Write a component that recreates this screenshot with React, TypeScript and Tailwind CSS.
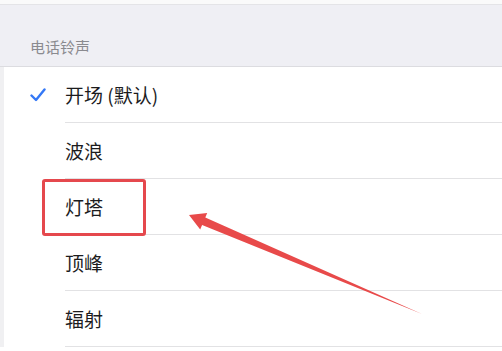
import React from "react";

const items = ["开场 (默认)", "波浪", "灯塔", "顶峰", "辐射"];

export default function App() {
  return (
    <div
      className="relative w-[502px] h-[351px] overflow-hidden bg-white"
      style={{ fontFamily: '"Noto Sans CJK SC", "Noto Sans", sans-serif' }}
    >
      <div className="h-[5px] bg-[#fafafa] border-b border-[#e4e4e7]" />
      <div className="h-[62px] bg-[#efeff4] border-b border-[#dcdce0] flex items-end pl-[30px] pb-[9px]">
        <span className="text-[15px] leading-[20px] text-[#8a8a8f]">电话铃声</span>
      </div>
      <div className="flex">
        <div className="w-[4px] bg-[#f0f0f2]" />
        <div className="flex-1 flex flex-col">
          {items.map((t, i) => (
            <div key={t} className="flex h-[56px]">
              <div className="w-[61px] flex items-center pl-[26px]">
                {i === 0 && (
                  <svg width="16" height="14" viewBox="0 0 16 14">
                    <path
                      d="M1.5 7.5 L6 12 L14.5 1.5"
                      fill="none"
                      stroke="#3478f6"
                      strokeWidth="2.4"
                      strokeLinecap="round"
                      strokeLinejoin="round"
                    />
                  </svg>
                )}
              </div>
              <div className="flex-1 flex items-center border-b border-[#e2e2e4]">
                <span className="text-[19px] leading-[26px] text-[#1c1c1e]">{t}</span>
              </div>
            </div>
          ))}
        </div>
      </div>
      <div className="absolute left-[42px] top-[179px] w-[104px] h-[57px] border-[3px] border-[#e5484d] rounded-[3px]" />
      <svg className="absolute left-0 top-0" width="502" height="351">
        <polygon
          points="189,215 207.2,213 205.3,217.6 422,314 202.1,225 200.2,229.6"
          fill="#e84a4a"
        />
      </svg>
    </div>
  );
}
